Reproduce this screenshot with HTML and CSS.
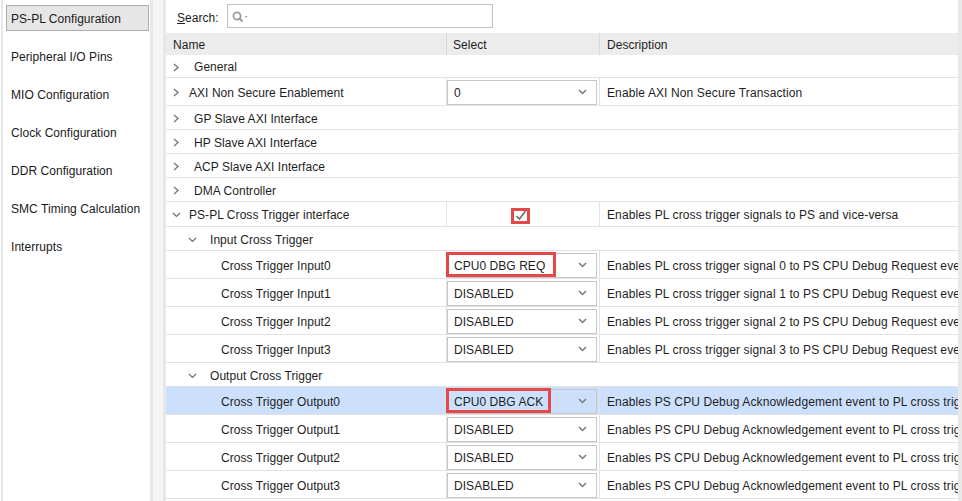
FILE: index.html
```html
<!DOCTYPE html>
<html>
<head>
<meta charset="utf-8">
<link rel="stylesheet" href="styles.css">
</head>
<body>
<div class="app">
  <nav class="sidebar">
    <div class="nav-item active">PS-PL Configuration</div>
    <div class="nav-item">Peripheral I/O Pins</div>
    <div class="nav-item">MIO Configuration</div>
    <div class="nav-item">Clock Configuration</div>
    <div class="nav-item">DDR Configuration</div>
    <div class="nav-item">SMC Timing Calculation</div>
    <div class="nav-item">Interrupts</div>
  </nav>
  <div class="splitter"></div>
  <main class="panel">
    <div class="search-row">
      <span class="search-label"><u>S</u>earch:</span>
      <div class="search-box">
        <svg class="search-icon" width="18" height="12" viewBox="0 0 18 12">
          <circle cx="5" cy="5" r="3.6" fill="none" stroke="#9a9a9a" stroke-width="1.7"/>
          <line x1="7.6" y1="7.6" x2="10.6" y2="10.6" stroke="#9a9a9a" stroke-width="2"/>
          <path d="M12.5 5 L15.5 5 L14 6.8 Z" fill="#9a9a9a"/>
        </svg>
      </div>
    </div>
    <div class="tree">
      <div class="row head">
        <div class="cell name">Name</div>
        <div class="cell sel">Select</div>
        <div class="cell desc">Description</div>
      </div>

      <div class="row group first"><div class="cell name l0c"><svg class="chev-r" width="6" height="9" viewBox="0 0 6 9"><path d="M1 1 L5 4.5 L1 8" fill="none" stroke="#707070" stroke-width="1.2"/></svg>General</div></div>

      <div class="row val dd-row">
        <div class="cell name l0v"><svg class="chev-r" width="6" height="9" viewBox="0 0 6 9"><path d="M1 1 L5 4.5 L1 8" fill="none" stroke="#707070" stroke-width="1.2"/></svg>AXI Non Secure Enablement</div>
        <div class="cell sel"><div class="dd"><span>0</span><svg class="dd-chev" width="9" height="6" viewBox="0 0 9 6"><path d="M1 1 L4.5 4.5 L8 1" fill="none" stroke="#7a7a7a" stroke-width="1.5"/></svg></div></div>
        <div class="cell desc">Enable AXI Non Secure Transaction</div>
      </div>

      <div class="row group"><div class="cell name l0c"><svg class="chev-r" width="6" height="9" viewBox="0 0 6 9"><path d="M1 1 L5 4.5 L1 8" fill="none" stroke="#707070" stroke-width="1.2"/></svg>GP Slave AXI Interface</div></div>
      <div class="row group"><div class="cell name l0c"><svg class="chev-r" width="6" height="9" viewBox="0 0 6 9"><path d="M1 1 L5 4.5 L1 8" fill="none" stroke="#707070" stroke-width="1.2"/></svg>HP Slave AXI Interface</div></div>
      <div class="row group"><div class="cell name l0c"><svg class="chev-r" width="6" height="9" viewBox="0 0 6 9"><path d="M1 1 L5 4.5 L1 8" fill="none" stroke="#707070" stroke-width="1.2"/></svg>ACP Slave AXI Interface</div></div>
      <div class="row group"><div class="cell name l0c"><svg class="chev-r" width="6" height="9" viewBox="0 0 6 9"><path d="M1 1 L5 4.5 L1 8" fill="none" stroke="#707070" stroke-width="1.2"/></svg>DMA Controller</div></div>

      <div class="row val cb-row">
        <div class="cell name l0e"><svg class="chev-d" width="9" height="6" viewBox="0 0 9 6"><path d="M1 1 L4.5 4.5 L8 1" fill="none" stroke="#707070" stroke-width="1.2"/></svg>PS-PL Cross Trigger interface</div>
        <div class="cell sel center"><span class="checkbox"><svg width="12" height="11" viewBox="0 0 12 11"><path d="M1.5 6 L4.5 9 L10.5 1" fill="none" stroke="#6a6a6a" stroke-width="1.6"/></svg></span></div>
        <div class="cell desc">Enables PL cross trigger signals to PS and vice-versa</div>
      </div>

      <div class="row group"><div class="cell name l1e"><svg class="chev-d" width="9" height="6" viewBox="0 0 9 6"><path d="M1 1 L4.5 4.5 L8 1" fill="none" stroke="#707070" stroke-width="1.2"/></svg>Input Cross Trigger</div></div>

      <div class="row val dd-row">
        <div class="cell name l2">Cross Trigger Input0</div>
        <div class="cell sel"><div class="dd"><span>CPU0 DBG REQ</span><svg class="dd-chev" width="9" height="6" viewBox="0 0 9 6"><path d="M1 1 L4.5 4.5 L8 1" fill="none" stroke="#7a7a7a" stroke-width="1.5"/></svg><span class="mark mark-req"></span></div></div>
        <div class="cell desc">Enables PL cross trigger signal 0 to PS CPU Debug Request event</div>
      </div>
      <div class="row val dd-row">
        <div class="cell name l2">Cross Trigger Input1</div>
        <div class="cell sel"><div class="dd"><span>DISABLED</span><svg class="dd-chev" width="9" height="6" viewBox="0 0 9 6"><path d="M1 1 L4.5 4.5 L8 1" fill="none" stroke="#7a7a7a" stroke-width="1.5"/></svg></div></div>
        <div class="cell desc">Enables PL cross trigger signal 1 to PS CPU Debug Request event</div>
      </div>
      <div class="row val dd-row">
        <div class="cell name l2">Cross Trigger Input2</div>
        <div class="cell sel"><div class="dd"><span>DISABLED</span><svg class="dd-chev" width="9" height="6" viewBox="0 0 9 6"><path d="M1 1 L4.5 4.5 L8 1" fill="none" stroke="#7a7a7a" stroke-width="1.5"/></svg></div></div>
        <div class="cell desc">Enables PL cross trigger signal 2 to PS CPU Debug Request event</div>
      </div>
      <div class="row val dd-row">
        <div class="cell name l2">Cross Trigger Input3</div>
        <div class="cell sel"><div class="dd"><span>DISABLED</span><svg class="dd-chev" width="9" height="6" viewBox="0 0 9 6"><path d="M1 1 L4.5 4.5 L8 1" fill="none" stroke="#7a7a7a" stroke-width="1.5"/></svg></div></div>
        <div class="cell desc">Enables PL cross trigger signal 3 to PS CPU Debug Request event</div>
      </div>

      <div class="row group"><div class="cell name l1e"><svg class="chev-d" width="9" height="6" viewBox="0 0 9 6"><path d="M1 1 L4.5 4.5 L8 1" fill="none" stroke="#707070" stroke-width="1.2"/></svg>Output Cross Trigger</div></div>

      <div class="row val dd-row selected">
        <div class="cell name l2">Cross Trigger Output0</div>
        <div class="cell sel"><div class="dd"><span>CPU0 DBG ACK</span><svg class="dd-chev" width="9" height="6" viewBox="0 0 9 6"><path d="M1 1 L4.5 4.5 L8 1" fill="none" stroke="#7a7a7a" stroke-width="1.5"/></svg><span class="mark mark-ack"></span></div></div>
        <div class="cell desc">Enables PS CPU Debug Acknowledgement event to PL cross trigger</div>
      </div>
      <div class="row val dd-row">
        <div class="cell name l2">Cross Trigger Output1</div>
        <div class="cell sel"><div class="dd"><span>DISABLED</span><svg class="dd-chev" width="9" height="6" viewBox="0 0 9 6"><path d="M1 1 L4.5 4.5 L8 1" fill="none" stroke="#7a7a7a" stroke-width="1.5"/></svg></div></div>
        <div class="cell desc">Enables PS CPU Debug Acknowledgement event to PL cross trigger</div>
      </div>
      <div class="row val dd-row">
        <div class="cell name l2">Cross Trigger Output2</div>
        <div class="cell sel"><div class="dd"><span>DISABLED</span><svg class="dd-chev" width="9" height="6" viewBox="0 0 9 6"><path d="M1 1 L4.5 4.5 L8 1" fill="none" stroke="#7a7a7a" stroke-width="1.5"/></svg></div></div>
        <div class="cell desc">Enables PS CPU Debug Acknowledgement event to PL cross trigger</div>
      </div>
      <div class="row val dd-row">
        <div class="cell name l2">Cross Trigger Output3</div>
        <div class="cell sel"><div class="dd"><span>DISABLED</span><svg class="dd-chev" width="9" height="6" viewBox="0 0 9 6"><path d="M1 1 L4.5 4.5 L8 1" fill="none" stroke="#7a7a7a" stroke-width="1.5"/></svg></div></div>
        <div class="cell desc">Enables PS CPU Debug Acknowledgement event to PL cross trigger</div>
      </div>
    </div>
  </main>
  <div class="vscroll"></div>
</div>
</body>
</html>
```

FILE: styles.css
```css
html, body {
  margin: 0;
  padding: 0;
  background: #ffffff;
}
body {
  font-family: "Liberation Sans", Arial, sans-serif;
  font-size: 12px;
  letter-spacing: 0.05px;
  color: #1e1e1e;
  width: 962px;
  height: 501px;
  overflow: hidden;
}
.app {
  display: flex;
  height: 501px;
}
.sidebar {
  width: 147px;
  margin-left: 1px;
  border-left: 2px solid #e8e8e8;
  background: #ffffff;
  padding-top: 5px;
  display: flex;
  flex-direction: column;
  gap: 12px;
  flex-shrink: 0;
}
.nav-item {
  height: 26px;
  line-height: 26px;
  margin-left: 3px;
  margin-right: 1px;
  padding-left: 5px;
  white-space: nowrap;
  color: #1a1a1a;
}
.nav-item.active {
  background: #e6e6e6;
  border: 1px solid #adadad;
  padding-left: 4px;
  height: 24px;
  line-height: 27px;
  margin-bottom: 1px;
}
.splitter {
  width: 10px;
  background: #f5f5f5;
  border-left: 3px solid #e8e8e8;
  border-right: 3px solid #e8e8e8;
  flex-shrink: 0;
}
.panel {
  width: 792px;
  flex-shrink: 0;
  overflow: hidden;
  background: #ffffff;
}
.vscroll {
  width: 4px;
  background: #e8e8e8;
  flex-shrink: 0;
}
.search-row {
  height: 33px;
  display: flex;
  align-items: flex-start;
  padding-left: 11px;
  box-sizing: border-box;
}
.search-label {
  margin-top: 11px;
  width: 50px;
}
.search-box {
  margin-top: 4px;
  width: 266px;
  height: 24px;
  box-sizing: border-box;
  border: 1px solid #c4c4c4;
  display: flex;
  align-items: center;
  padding-left: 4px;
}
.search-icon {
  display: block;
  margin-top: 1px;
}
.tree {
  width: 792px;
}
.row {
  display: grid;
  grid-template-columns: 280px 153px 359px;
  border-bottom: 1px solid #e2e2e2;
  box-sizing: border-box;
  height: 24px;
}
.row.first { height: 23px; }
.row.head {
  height: 22px;
  background: #ececec;
  border-bottom: none;
}
.row.dd-row { height: 28px; }
.row.cb-row { height: 25px; }
.row.selected { background: #cce0fb; }
.cell {
  display: flex;
  align-items: center;
  white-space: nowrap;
  overflow: hidden;
  position: relative;
}
.cell.name, .cell.desc, .head .cell {
  padding-top: 2px;
  box-sizing: border-box;
}
.head .cell.name { padding-left: 7px; }
.head .cell.sel {
  border-left: 1px solid #d8d8d8;
  padding-left: 6px;
}
.head .cell.desc {
  border-left: 1px solid #d8d8d8;
  padding-left: 7px;
}
.val .cell.sel {
  border-left: 1px solid #e2e2e2;
  overflow: visible;
}
.val .cell.desc {
  border-left: 1px solid #e2e2e2;
  padding-left: 7px;
  letter-spacing: 0.12px;
}
.cell.center { justify-content: center; padding-right: 5px; }
.l0c { padding-left: 7px; }
.l0c .chev-r { margin-right: 15px; }
.l0v { padding-left: 7px; }
.l0v .chev-r { margin-right: 10px; }
.l0e { padding-left: 6px; }
.l0e .chev-d { margin-right: 8px; }
.l1e { padding-left: 22px; }
.l1e .chev-d { margin-right: 13px; }
.l2 { padding-left: 55px; }
.chev-r, .chev-d { display: block; flex-shrink: 0; }
.dd {
  width: 150px;
  height: 25px;
  box-sizing: border-box;
  border: 1px solid #c6c6c6;
  background: #ffffff;
  display: flex;
  align-items: center;
  padding-left: 6px;
  padding-top: 2px;
  position: relative;
  margin-top: 1px;
}
.selected .dd { background: transparent; }
.dd-chev {
  margin-left: auto;
  margin-right: 9px;
  margin-bottom: 2px;
  display: block;
}
.mark {
  position: absolute;
  left: -2px;
  top: -2px;
  height: 25px;
  box-sizing: border-box;
  border: 3px solid #e44848;
}
.mark-req { width: 110px; }
.mark-ack { width: 105px; }
.checkbox {
  width: 19px;
  height: 16px;
  box-sizing: border-box;
  border: 3px solid #e44848;
  background: #ffffff;
  display: flex;
  align-items: center;
  justify-content: center;
  margin-top: 3px;
}
.checkbox svg { display: block; }
```
